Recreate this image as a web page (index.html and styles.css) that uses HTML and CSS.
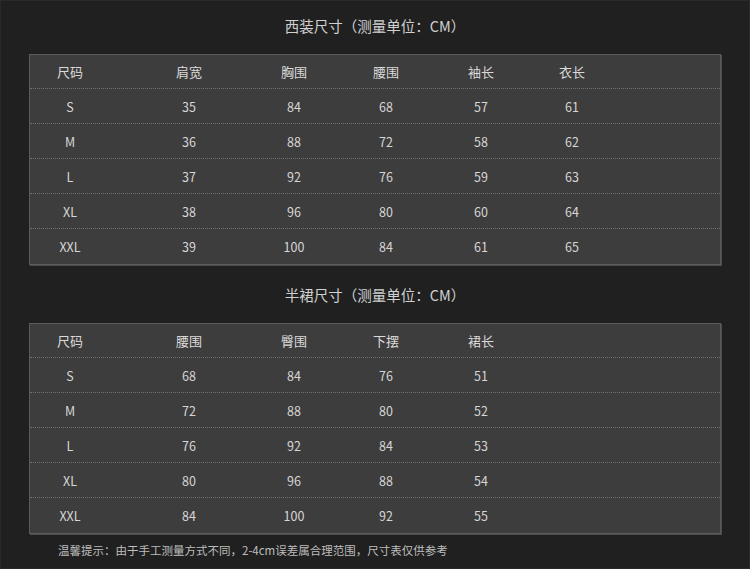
FILE: index.html
```html
<!DOCTYPE html>
<html lang="zh-CN">
<head>
<meta charset="utf-8">
<title>尺码表</title>
<link rel="stylesheet" href="styles.css">
</head>
<body>
<div class="page">
  <h2 class="title title-first">西装尺寸（测量单位：CM）</h2>
  <div class="table">
    <div class="row head">
      <span>尺码</span><span>肩宽</span><span>胸围</span><span>腰围</span><span>袖长</span><span>衣长</span>
    </div>
    <div class="row"><span>S</span><span>35</span><span>84</span><span>68</span><span>57</span><span>61</span></div>
    <div class="row"><span>M</span><span>36</span><span>88</span><span>72</span><span>58</span><span>62</span></div>
    <div class="row"><span>L</span><span>37</span><span>92</span><span>76</span><span>59</span><span>63</span></div>
    <div class="row"><span>XL</span><span>38</span><span>96</span><span>80</span><span>60</span><span>64</span></div>
    <div class="row"><span>XXL</span><span>39</span><span>100</span><span>84</span><span>61</span><span>65</span></div>
  </div>

  <h2 class="title title-second">半裙尺寸（测量单位：CM）</h2>
  <div class="table">
    <div class="row head">
      <span>尺码</span><span>腰围</span><span>臀围</span><span>下摆</span><span>裙长</span>
    </div>
    <div class="row"><span>S</span><span>68</span><span>84</span><span>76</span><span>51</span></div>
    <div class="row"><span>M</span><span>72</span><span>88</span><span>80</span><span>52</span></div>
    <div class="row"><span>L</span><span>76</span><span>92</span><span>84</span><span>53</span></div>
    <div class="row"><span>XL</span><span>80</span><span>96</span><span>88</span><span>54</span></div>
    <div class="row"><span>XXL</span><span>84</span><span>100</span><span>92</span><span>55</span></div>
  </div>

  <p class="note">温馨提示：由于手工测量方式不同，2-4cm误差属合理范围，尺寸表仅供参考</p>
</div>
</body>
</html>
```

FILE: styles.css
```css
html, body {
  margin: 0;
  padding: 0;
  background: #202020;
}

body {
  font-family: "Noto Sans CJK SC", "Noto Sans", sans-serif;
  color: #d4d4d4;
}

.page {
  width: 750px;
  height: 569px;
  box-sizing: border-box;
  border: 1px solid #2a2a2a;
  background: #202020;
  overflow: hidden;
}

.title {
  margin: 0;
  font-size: 14.5px;
  font-weight: normal;
  line-height: 20px;
  text-align: center;
  color: #d0d0d0;
}

.title-first {
  margin-top: 15px;
  margin-bottom: 18px;
}

.title-second {
  margin-top: 20px;
  margin-bottom: 18px;
}

.table {
  margin: 0 28px;
  border: 1px solid #5c5c5c;
  box-shadow: 1px 1px 0 #4b4b4b;
  background: #3e3d3d;
}

.row {
  display: grid;
  grid-template-columns: 80px 158px 52px 132px 58px 124px 1fr;
  align-items: center;
  height: 35px;
  box-sizing: border-box;
  border-bottom: 1px dotted #707070;
  font-size: 12.5px;
  color: #d6d6d6;
}

.row:last-child {
  border-bottom: none;
}

.row.head {
  height: 34px;
  font-size: 13px;
  color: #dadada;
}

.row span {
  text-align: center;
}

.note {
  margin: 6px 0 0 57px;
  font-family: "Noto Sans CJK TC", "Noto Sans CJK SC", sans-serif;
  font-size: 11.5px;
  line-height: 20px;
  color: #bdbdbd;
}
```
